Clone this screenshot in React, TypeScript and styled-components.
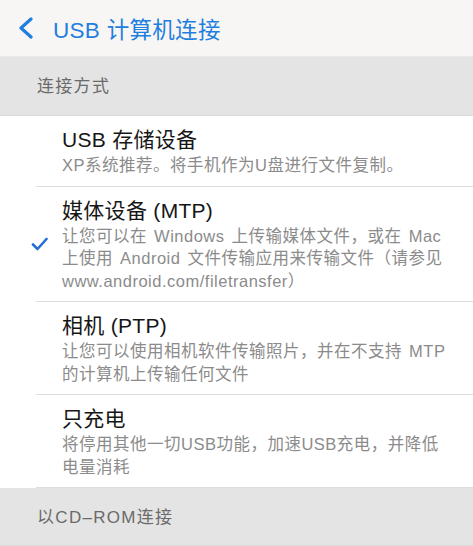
import React from 'react';
import styled, { createGlobalStyle } from 'styled-components';

const GlobalStyle = createGlobalStyle`
    html, body {
        margin: 0;
        padding: 0;
        background: #ffffff;
    }
    body {
        font-family: "Liberation Sans", "Noto Sans CJK SC", sans-serif;
    }
`;

const Page = styled.div`
    display: flex;
    flex-direction: column;
    min-height: 100vh;
    background: #ffffff;
`;

const Header = styled.div`
    height: 56px;
    display: flex;
    align-items: center;
    gap: 19px;
    padding-left: 17px;
    background: #f8f6f4;
    border-bottom: 1px solid #ebe8e5;
`;

const BackIcon = styled.svg`
    width: 17px;
    height: 22px;
    color: #1e7fdf;
`;

const Title = styled.div`
    font-size: 22.5px;
    color: #1e7fdf;
    letter-spacing: 0.3px;
`;

const SectionBand = styled.div<{ $fill?: boolean }>`
    height: 59px;
    display: flex;
    align-items: center;
    padding-left: 37px;
    padding-bottom: 3px;
    box-sizing: border-box;
    background: #e4e4e4;
    color: #6a6a6a;
    font-size: 17px;
    letter-spacing: 1.3px;
    border-bottom: 1px solid #d9d9d9;
    flex: ${(p) => (p.$fill ? 1 : 'none')};
`;

const List = styled.div`
    display: flex;
    flex-direction: column;
    background: #ffffff;
`;

const Row = styled.div`
    position: relative;
    display: flex;
    align-items: center;
    padding: 10px 0 10px 0;

    &::after {
        content: '';
        position: absolute;
        left: 36px;
        right: 0;
        bottom: 0;
        height: 1px;
        background: #dedede;
    }
`;

const CheckSlot = styled.div`
    width: 62px;
    flex-shrink: 0;
    display: flex;
    justify-content: flex-start;
    padding-left: 31px;
    box-sizing: border-box;
`;

const CheckIcon = styled.svg`
    width: 17px;
    height: 14px;
    color: #2470d8;
`;

const Body = styled.div`
    flex: 1;
    display: flex;
    flex-direction: column;
`;

const ItemTitle = styled.div`
    font-size: 21px;
    line-height: 28px;
    color: #161616;
    letter-spacing: 0.3px;
`;

const ItemLine = styled.div`
    font-size: 16.5px;
    line-height: 22.5px;
    color: #8b8b8b;
    letter-spacing: 0.5px;
    word-spacing: 2px;
    white-space: nowrap;
`;

type Option = {
    title: string;
    lines: string[];
    selected?: boolean;
};

const options: Option[] = [
    {
        title: 'USB 存储设备',
        lines: ['XP系统推荐。将手机作为U盘进行文件复制。'],
    },
    {
        title: '媒体设备 (MTP)',
        lines: [
            '让您可以在 Windows 上传输媒体文件，或在 Mac',
            '上使用 Android 文件传输应用来传输文件（请参见',
            'www.android.com/filetransfer）',
        ],
        selected: true,
    },
    {
        title: '相机 (PTP)',
        lines: ['让您可以使用相机软件传输照片，并在不支持 MTP', '的计算机上传输任何文件'],
    },
    {
        title: '只充电',
        lines: ['将停用其他一切USB功能，加速USB充电，并降低', '电量消耗'],
    },
];

const App: React.FC = () => {
    return (
        <Page>
            <GlobalStyle />
            <Header>
                <BackIcon viewBox="0 0 17 22" fill="none">
                    <path d="M14 2 L4 11 L14 20" stroke="currentColor" strokeWidth="3.2" strokeLinecap="round" strokeLinejoin="round" />
                </BackIcon>
                <Title>USB 计算机连接</Title>
            </Header>
            <SectionBand>连接方式</SectionBand>
            <List>
                {options.map((opt) => (
                    <Row key={opt.title}>
                        <CheckSlot>
                            {opt.selected && (
                                <CheckIcon viewBox="0 0 17 14" fill="none">
                                    <path d="M2 7.5 L6.5 12 L15.5 2" stroke="currentColor" strokeWidth="2.6" strokeLinecap="round" strokeLinejoin="round" />
                                </CheckIcon>
                            )}
                        </CheckSlot>
                        <Body>
                            <ItemTitle>{opt.title}</ItemTitle>
                            {opt.lines.map((line) => (
                                <ItemLine key={line}>{line}</ItemLine>
                            ))}
                        </Body>
                    </Row>
                ))}
            </List>
            <SectionBand $fill>以CD–ROM连接</SectionBand>
        </Page>
    );
};

export default App;
